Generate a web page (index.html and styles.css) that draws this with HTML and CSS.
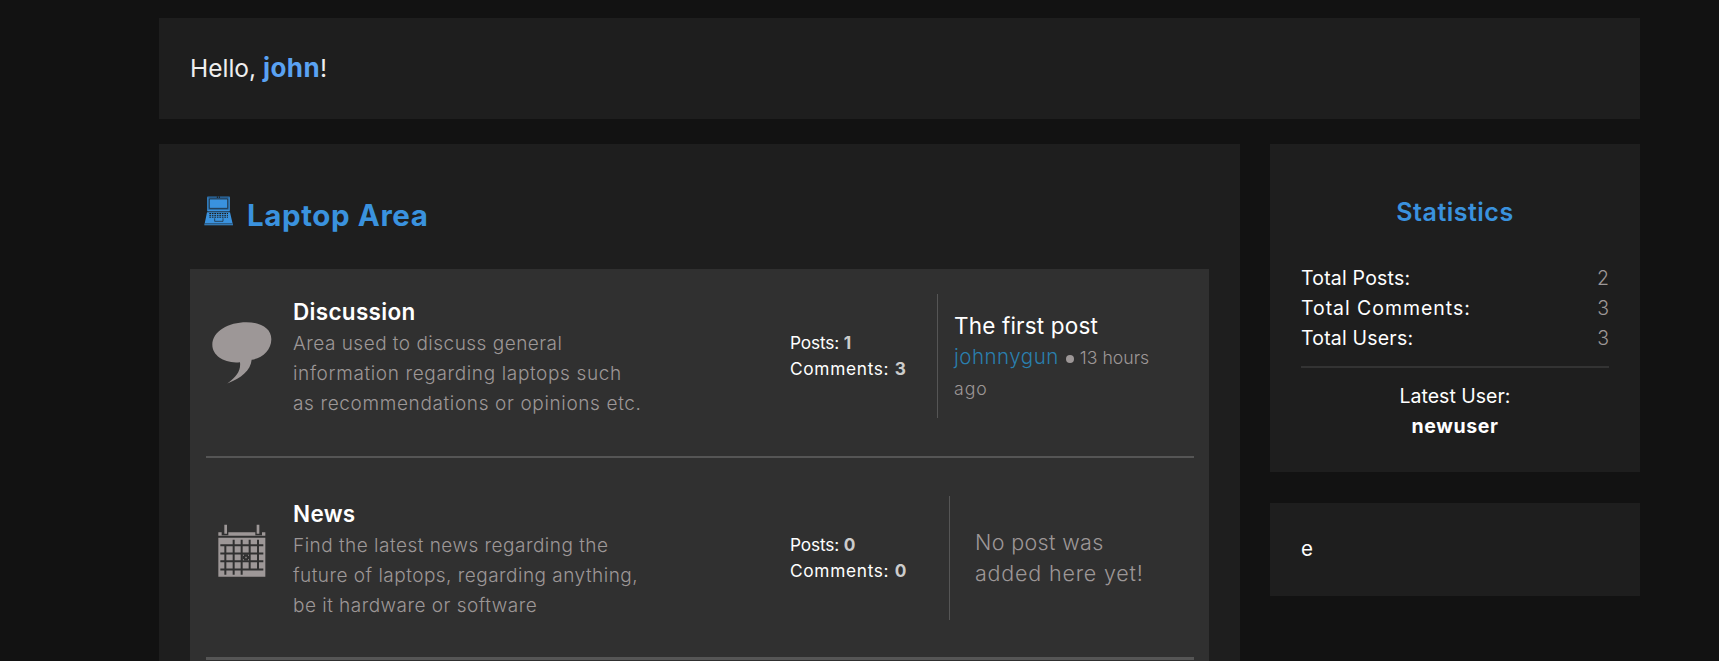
FILE: index.html
```html
<!DOCTYPE html>
<html lang="en">
<head>
<meta charset="utf-8">
<title>Forum</title>
<link rel="stylesheet" href="styles.css">
</head>
<body>
<div class="page">
  <header class="panel greeting"><span>Hello, </span><b class="username">john</b><span>!</span></header>
  <div class="columns">
    <main class="panel area">
      <h1 class="area-title">
        <svg class="laptop" viewBox="28 32 88 90" aria-hidden="true"><path class="dim" d="M37 33h67v45H37z"/><path d="M37 36h3v42h-3zM101 36h3v42h-3zM37 73h67v5H37zM36 81h69l9 39H28z"/><path class="screen" d="M43 41h55v28H43z"/><path class="keys" d="M43 84.5h56M43 90h56M43 95.5h56"/><path class="cut" d="M59 99v9h25v-9M30 115.5h82"/><path class="slots" d="M67 33v5M73 33v5"/></svg>
        <span class="area-name">Laptop Area</span>
      </h1>
      <div class="boards">
        <section class="board">
          <div class="board-icon"><svg class="bubble" viewBox="20 34 180 188" aria-hidden="true"><path d="M104 157C60 162 21 139 21 105C21 64 70 37 123 37C166 37 198 56 198 88C198 121 170 145 139 150C136 182 108 205 66 221C93 200 107 184 104 157z"/></svg></div>
          <div class="board-info"><h2>Discussion</h2><p>Area used to discuss general<br><span class="wide">information regarding laptops such</span><br><span class="wide">as recommendations or opinions etc.</span></p></div>
          <div class="counts"><div class="posts">Posts: <b>1</b></div><div class="comments">Comments: <b>3</b></div></div>
          <div class="last"><h3>The first post</h3><p><a class="author">johnnygun</a> <i class="dot"></i> <span>13 hours</span><br><span class="ago">ago</span></p></div>
        </section>
        <section class="board">
          <div class="board-icon"><svg class="calendar" viewBox="38 28 144 158" aria-hidden="true"><path d="M39 52h10v9h20v-9h81v9h20v-9h10v11H39zM57 30h8v27h-8zM154 30h8v27h-8zM39 69h141v117H39z"/><path class="grid" d="M45 91h129M45 116h129M45 139h129M45 164h129M60 91v89M85 75v105M109 75v105M133 75v89M158 75v89"/><path class="mark" d="M111 118h21v19h-21z"/><path d="M120 126h4v4h-4zM113 120h3v3h-3zM128 120h3v3h-3zM113 133h3v3h-3zM128 133h3v3h-3z"/></svg></div>
          <div class="board-info"><h2>News</h2><p>Find the latest news regarding the<br>future of laptops, regarding anything,<br>be it hardware or software</p></div>
          <div class="counts"><div class="posts">Posts: <b>0</b></div><div class="comments">Comments: <b>0</b></div></div>
          <div class="last empty"><p>No post was<br><span class="wide">added here yet!</span></p></div>
        </section>
      </div>
    </main>
    <aside class="side">
      <section class="panel stats">
        <h2>Statistics</h2>
        <dl>
          <div><dt>Total Posts:</dt><dd>2</dd></div>
          <div><dt class="wide">Total Comments:</dt><dd>3</dd></div>
          <div><dt>Total Users:</dt><dd>3</dd></div>
        </dl>
        <div class="latest">Latest User:<br><b>newuser</b></div>
      </section>
      <section class="panel extra">e</section>
    </aside>
  </div>
</div>
</body>
</html>
```
FILE: styles.css
```css
* { box-sizing: border-box; }
body { margin: 0; background: #121212; color: #fff; font-family: Inter, "Open Sans", sans-serif; }
h1, h2, h3, p, dl, dd { margin: 0; }
.page { width: 1481px; margin: 0 0 0 159px; padding-top: 18px; }
.panel { background: #1e1e1e; padding: 31px; }
.greeting { height: 101px; padding-bottom: 33px; display: flex; align-items: center; font-size: 24.5px; white-space: pre; color: #eee; }
.username { color: #5aa2f2; font-size: 26px; letter-spacing: 0.4px; }
.columns { display: flex; gap: 30px; margin-top: 25px; align-items: flex-start; }
.area { width: 1081px; height: 517px; padding-bottom: 0; }
.area-title { display: flex; align-items: center; height: 82px; padding-left: 14px; gap: 13px; font-size: 29.5px; line-height: 42px; letter-spacing: 0.6px; color: #3a92de; }
.area-name { margin-top: -2px; }
.laptop { width: 30px; height: 30px; fill: #3a92de; margin-top: -10px; }
.laptop .dim { fill: #275f91; }
.laptop .screen { stroke: #1e1e1e; stroke-width: 2; }
.laptop .cut, .laptop .keys { fill: none; stroke: #1e1e1e; stroke-width: 2; }
.laptop .keys { stroke-width: 3; stroke-dasharray: 5 2.5; }
.laptop .slots { stroke: #1e1e1e; stroke-width: 3; }
.boards { height: 392px; background: #303030; margin-top: 12px; padding: 0 15px 0 16px; }
.board { display: flex; align-items: center; height: 202px; padding: 38px 0 37px; border-bottom: 3px solid #555; }
.board:first-child { height: 189px; padding: 25px 0 38px; border-bottom-width: 2px; }
.board-icon { width: 71px; display: flex; justify-content: center; margin-right: 16px; fill: #9d9797; }
.bubble { width: 60px; height: 63px; margin-bottom: 8px; }
.calendar { width: 48px; height: 53px; margin-bottom: 15px; }
.grid { fill: none; stroke: #303030; stroke-width: 6; }
.mark { fill: #303030; }
.board-info { width: 497px; padding-top: 2px; }
.board h2 { font-size: 22.5px; font-weight: 600; line-height: 34px; letter-spacing: 0.3px; }
.board-info p { font-size: 19px; line-height: 30px; font-weight: 300; letter-spacing: 0.48px; color: #9d9797; }
.board-info p .wide { letter-spacing: 0.64px; }
.counts { width: 147px; font-size: 17.3px; line-height: 26px; white-space: nowrap; }
.counts b { color: #ccc; letter-spacing: 0; }
.posts { letter-spacing: -0.15px; }
.comments { letter-spacing: 0.68px; }
.last { flex: 1; height: 124px; padding: 1px 0 0 16px; border-left: 1px solid #555; display: flex; flex-direction: column; justify-content: center; white-space: nowrap; }
.last h3 { font-size: 22.5px; font-weight: 400; line-height: 33px; letter-spacing: 0.17px; }
.last p { font-size: 17.7px; line-height: 30.5px; font-weight: 300; color: #9d9797; }
.last .author { font-size: 20.5px; letter-spacing: 0.5px; color: #2a7fae; }
.ago { letter-spacing: 1px; }
.dot { display: inline-block; width: 8px; height: 8px; margin: 0 1px 1px 2px; border-radius: 50%; background: #9d9797; }
.last.empty { margin-left: 12px; padding: 0 0 0 25px; }
.last.empty p { font-size: 21.5px; line-height: 31px; letter-spacing: 0.35px; }
.last.empty .wide { letter-spacing: 0.8px; }
.side { width: 370px; display: grid; gap: 31px; }
.stats { height: 328px; }
.stats h2 { padding: 18px 0 32px; font-size: 25px; font-weight: 600; line-height: 38px; letter-spacing: 0.5px; text-align: center; color: #3a92de; }
.stats dl, .latest, .extra { font-size: 19.5px; line-height: 30px; }
.stats dl div { display: flex; justify-content: space-between; }
.stats dl { padding-bottom: 13px; border-bottom: 2px solid #333; letter-spacing: 0.2px; }
.stats .wide { letter-spacing: 0.95px; }
.stats dd { color: #9d9797; font-weight: 300; letter-spacing: 0; }
.latest { padding-top: 13px; text-align: center; }
.latest b { letter-spacing: 0.62px; }
.extra { height: 93px; font-size: 20.5px; }
```
